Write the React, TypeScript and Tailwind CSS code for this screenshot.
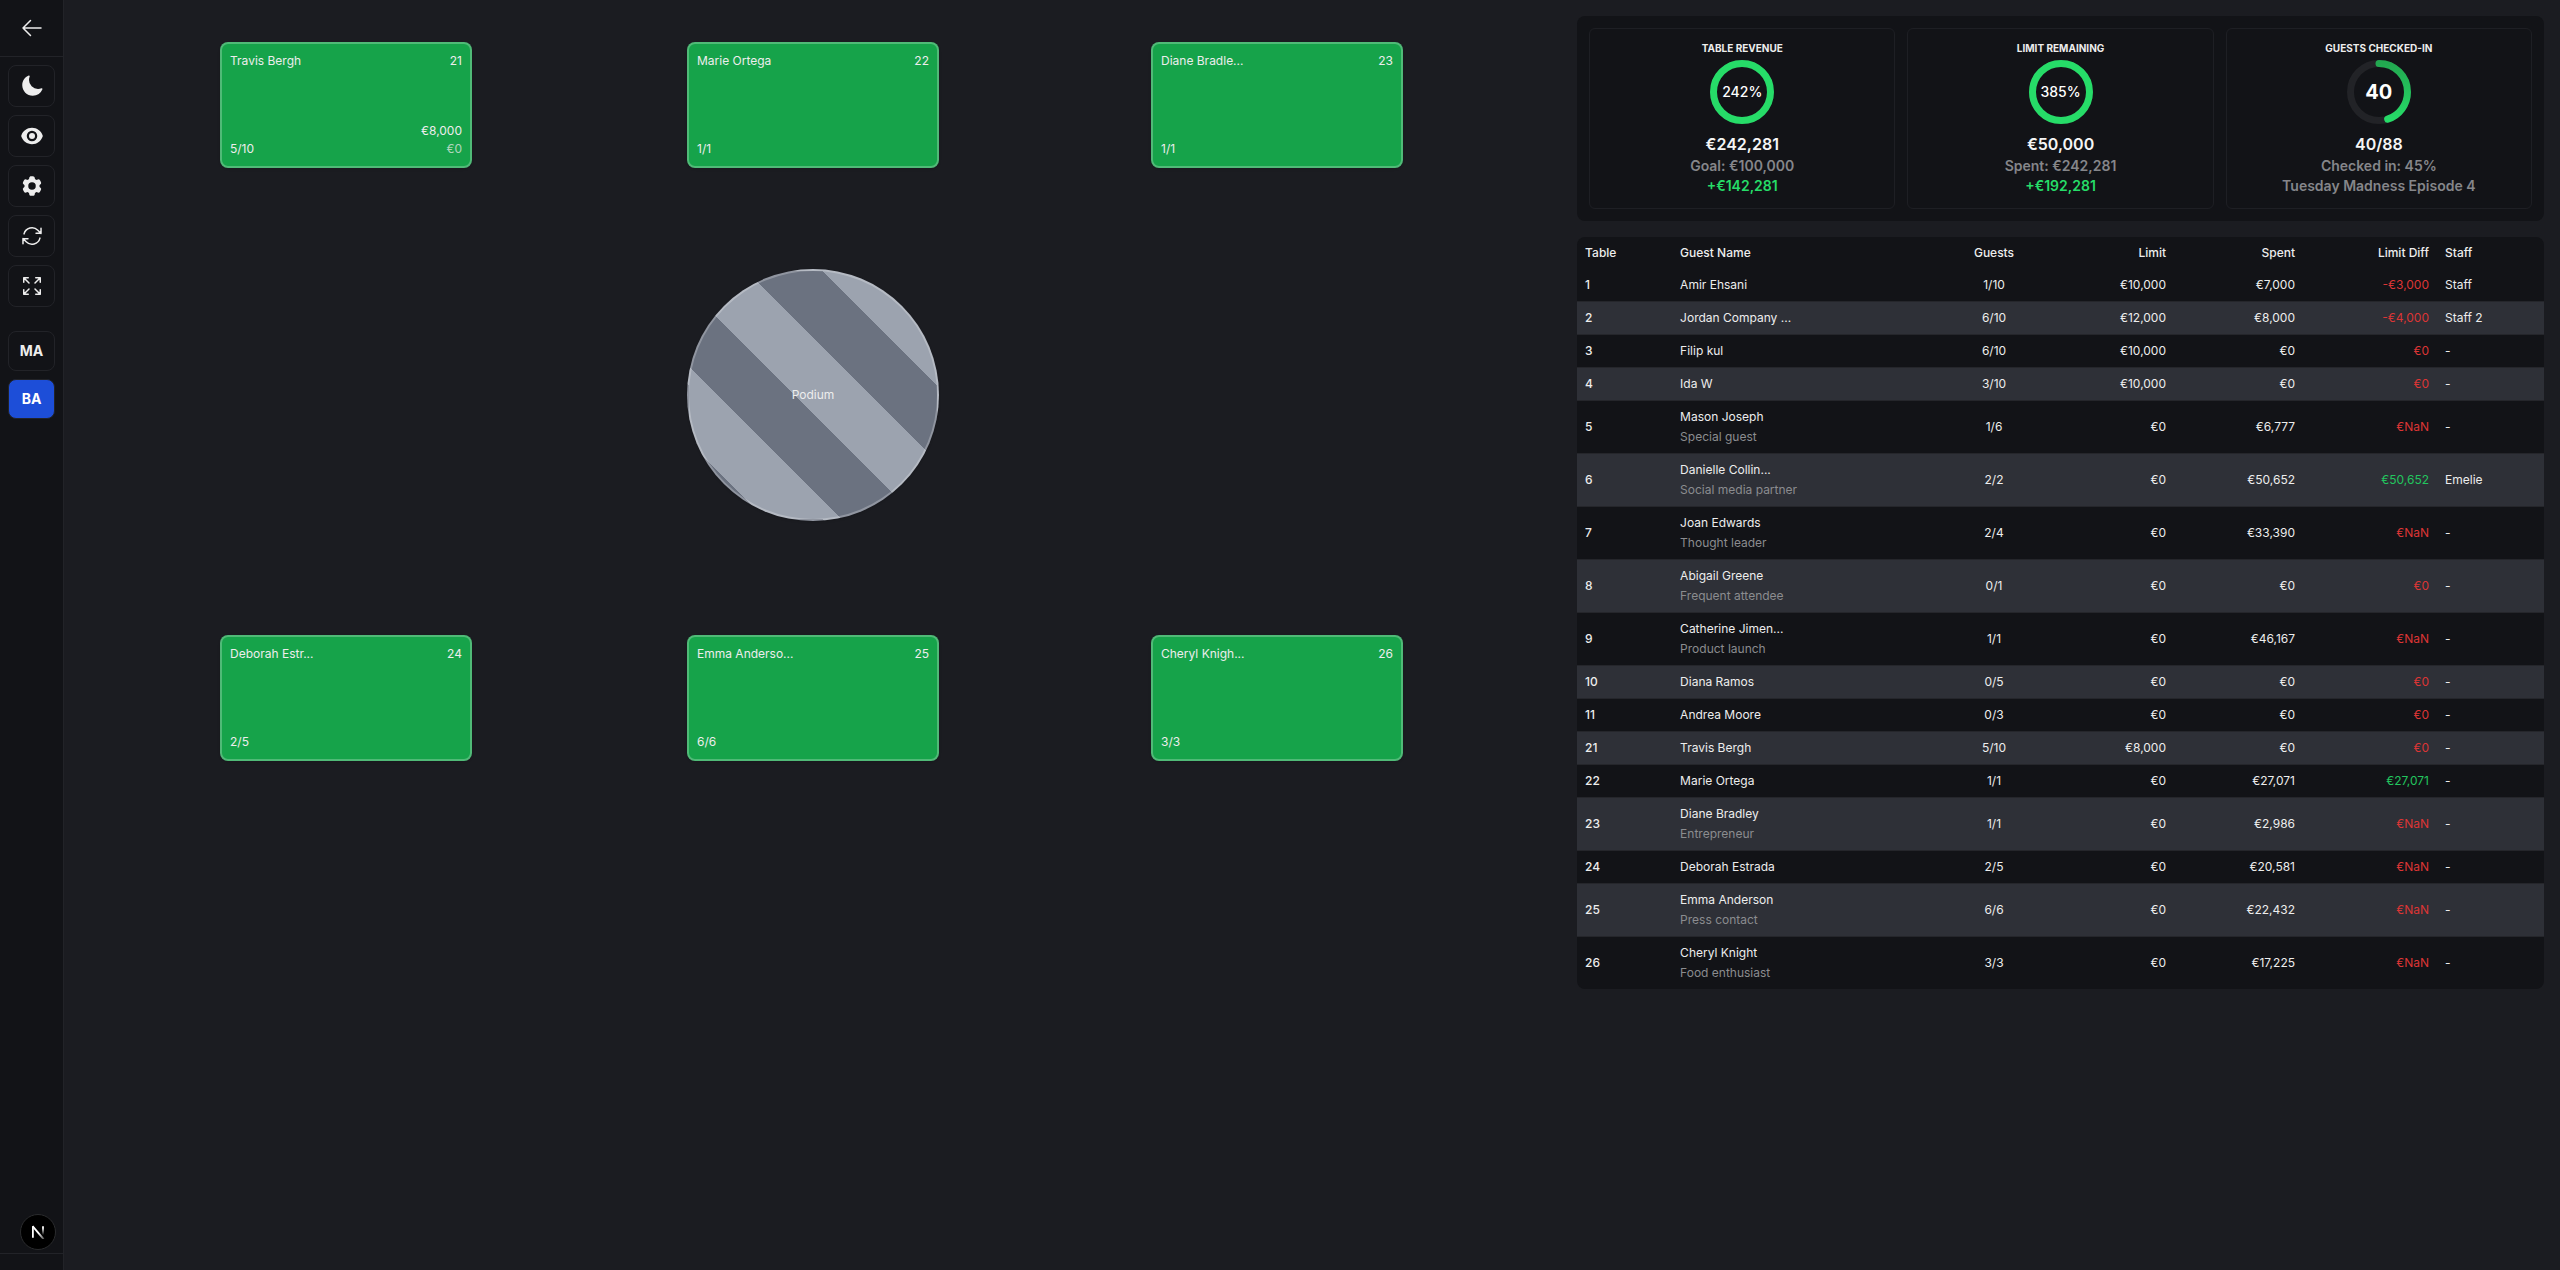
import type { ReactNode } from "react";
import {
  HiCog6Tooth,
  HiEye,
  HiMoon,
  HiOutlineArrowLeft,
  HiOutlineArrowPath,
  HiOutlineArrowsPointingOut,
} from "react-icons/hi2";

type Booking = {
  table: number;
  name: string;
  note?: string;
  guests: string;
  limit: string;
  spent: string;
  diff: string;
  staff?: string;
};

type FloorTable = {
  table: number;
  name: string;
  guests: string;
  limit?: string;
  spent?: string;
  x: number;
  y: number;
};

const bookings: Booking[] = [
  { table: 1, name: "Amir Ehsani", guests: "1/10", limit: "€10,000", spent: "€7,000", diff: "-€3,000", staff: "Staff" },
  { table: 2, name: "Jordan Company ...", guests: "6/10", limit: "€12,000", spent: "€8,000", diff: "-€4,000", staff: "Staff 2" },
  { table: 3, name: "Filip kul", guests: "6/10", limit: "€10,000", spent: "€0", diff: "€0" },
  { table: 4, name: "Ida W", guests: "3/10", limit: "€10,000", spent: "€0", diff: "€0" },
  { table: 5, name: "Mason Joseph", note: "Special guest", guests: "1/6", limit: "€0", spent: "€6,777", diff: "€NaN" },
  { table: 6, name: "Danielle Collin...", note: "Social media partner", guests: "2/2", limit: "€0", spent: "€50,652", diff: "€50,652", staff: "Emelie" },
  { table: 7, name: "Joan Edwards", note: "Thought leader", guests: "2/4", limit: "€0", spent: "€33,390", diff: "€NaN" },
  { table: 8, name: "Abigail Greene", note: "Frequent attendee", guests: "0/1", limit: "€0", spent: "€0", diff: "€0" },
  { table: 9, name: "Catherine Jimen...", note: "Product launch", guests: "1/1", limit: "€0", spent: "€46,167", diff: "€NaN" },
  { table: 10, name: "Diana Ramos", guests: "0/5", limit: "€0", spent: "€0", diff: "€0" },
  { table: 11, name: "Andrea Moore", guests: "0/3", limit: "€0", spent: "€0", diff: "€0" },
  { table: 21, name: "Travis Bergh", guests: "5/10", limit: "€8,000", spent: "€0", diff: "€0" },
  { table: 22, name: "Marie Ortega", guests: "1/1", limit: "€0", spent: "€27,071", diff: "€27,071" },
  { table: 23, name: "Diane Bradley", note: "Entrepreneur", guests: "1/1", limit: "€0", spent: "€2,986", diff: "€NaN" },
  { table: 24, name: "Deborah Estrada", guests: "2/5", limit: "€0", spent: "€20,581", diff: "€NaN" },
  { table: 25, name: "Emma Anderson", note: "Press contact", guests: "6/6", limit: "€0", spent: "€22,432", diff: "€NaN" },
  { table: 26, name: "Cheryl Knight", note: "Food enthusiast", guests: "3/3", limit: "€0", spent: "€17,225", diff: "€NaN" },
];

const floorTables: FloorTable[] = [
  { table: 21, name: "Travis Bergh", guests: "5/10", limit: "€8,000", spent: "€0", x: 156, y: 42 },
  { table: 22, name: "Marie Ortega", guests: "1/1", x: 623, y: 42 },
  { table: 23, name: "Diane Bradle...", guests: "1/1", x: 1087, y: 42 },
  { table: 24, name: "Deborah Estr...", guests: "2/5", x: 156, y: 635 },
  { table: 25, name: "Emma Anderso...", guests: "6/6", x: 623, y: 635 },
  { table: 26, name: "Cheryl Knigh...", guests: "3/3", x: 1087, y: 635 },
];

const tools = [
  { label: "Toggle dark mode", icon: HiMoon },
  { label: "Toggle visibility", icon: HiEye },
  { label: "Settings", icon: HiCog6Tooth },
  { label: "Refresh", icon: HiOutlineArrowPath },
  { label: "Fullscreen", icon: HiOutlineArrowsPointingOut },
];

function Sidebar() {
  return (
    <aside className="flex w-16 shrink-0 flex-col border-r border-[#222328] bg-[#121317]">
      <div className="flex h-[57px] items-center justify-center border-b border-[#222328]">
        <button type="button" aria-label="Back">
          <HiOutlineArrowLeft className="size-6" />
        </button>
      </div>

      <div className="flex flex-col gap-2 p-2">
        {tools.map(({ label, icon: Icon }) => (
          <button
            key={label}
            type="button"
            aria-label={label}
            className="flex items-center justify-center rounded-lg border border-[#222328] p-2"
          >
            <Icon className="size-6" />
          </button>
        ))}
      </div>

      {/* Areas */}
      <div className="mt-2 flex flex-col gap-2 p-2 text-sm font-bold">
        <button type="button" className="h-10 rounded-lg border border-[#222328]">
          MA
        </button>
        <button type="button" className="h-10 rounded-lg border border-[#222328] bg-[#1d4ed8] text-white">
          BA
        </button>
      </div>

      <div className="mt-auto border-t border-[#222328] p-2" />
    </aside>
  );
}

function FloorCard({ item }: { item: FloorTable }) {
  return (
    <div
      className="absolute flex h-[126px] w-[252px] flex-col justify-between rounded-lg border-2 border-white/25 bg-[#16a34a] p-2 shadow-sm"
      style={{ left: item.x, top: item.y }}
    >
      <div className="flex justify-between">
        <span>{item.name}</span>
        <span>{item.table}</span>
      </div>
      <div className="flex items-end justify-between">
        <span>{item.guests}</span>
        {item.limit && (
          <div className="text-right">
            <div>{item.limit}</div>
            <div className="opacity-70">{item.spent}</div>
          </div>
        )}
      </div>
    </div>
  );
}

function FloorPlan() {
  return (
    <main className="relative w-3/5 text-xs leading-[18px]">
      {floorTables.map((item) => (
        <FloorCard key={item.table} item={item} />
      ))}
      <div className="absolute top-[269px] left-[623px] flex size-[252px] items-center justify-center rounded-full border-2 border-white/25 bg-[repeating-linear-gradient(45deg,#6b7280_0px,#6b7280_54px,#9ca3af_54px,#9ca3af_108px)] shadow-sm">
        Podium
      </div>
    </main>
  );
}

const RADIUS = 28.5;
const LENGTH = 2 * Math.PI * RADIUS;

function Ring({ id, percent, children }: { id: string; percent: number; children: ReactNode }) {
  const full = percent >= 100;
  return (
    <div className="mt-1 grid size-16 place-items-center">
      <svg viewBox="0 0 64 64" fill="none" strokeWidth="7" className="col-start-1 row-start-1 size-16 -rotate-90">
        <defs>
          <linearGradient id={id} x1="0" y1="0" x2="1" y2="0">
            <stop offset="0" stopColor="#26dc68" />
            <stop offset="1" stopColor="#22a850" />
          </linearGradient>
        </defs>
        <circle cx="32" cy="32" r={RADIUS} stroke="#222327" />
        <circle
          cx="32"
          cy="32"
          r={RADIUS}
          stroke={full ? "#26dc68" : `url(#${id})`}
          strokeLinecap="round"
          strokeDasharray={`${(Math.min(percent, 100) / 100) * LENGTH} ${LENGTH}`}
        />
      </svg>
      <div className="col-start-1 row-start-1 text-white">{children}</div>
    </div>
  );
}

type StatProps = {
  title: string;
  ring: ReactNode;
  value: string;
  detail: string;
  extra: string;
  extraClass: string;
};

function Stat({ title, ring, value, detail, extra, extraClass }: StatProps) {
  return (
    <section className="flex flex-1 flex-col items-center rounded-md border border-[#1e1f24] p-3 text-sm leading-5 font-semibold">
      <h2 className="text-[10px] leading-[15px] font-bold uppercase">{title}</h2>
      {ring}
      <p className="mt-2 text-base leading-6 text-[#f5f5f5]">{value}</p>
      <p className="text-[#85868a]">{detail}</p>
      <p className={extraClass}>{extra}</p>
    </section>
  );
}

function diffColor(diff: string) {
  return /^€[1-9]/.test(diff) ? "text-[#22c55e]" : "text-[#dc3535]";
}

function BookingTable() {
  return (
    <div className="overflow-hidden rounded-lg bg-[#121317]">
      <table className="w-full table-fixed text-xs leading-5">
        <thead>
          <tr className="text-left [&>th]:px-2 [&>th]:py-[6px] [&>th]:font-medium">
            <th className="w-[95px]">Table</th>
            <th>Guest Name</th>
            <th className="w-[102px] text-center">Guests</th>
            <th className="w-[129px] text-right">Limit</th>
            <th className="w-[129px] text-right">Spent</th>
            <th className="w-[134px] text-right">Limit Diff</th>
            <th className="w-[107px]">Staff</th>
          </tr>
        </thead>
        <tbody>
          {bookings.map((b) => (
            <tr
              key={b.table}
              className="border-b border-[#25262b] last:border-b-0 even:bg-[#2e3037] [&>td]:px-2 [&>td]:py-[6px]"
            >
              <td className="font-medium">{b.table}</td>
              <td>
                <div>{b.name}</div>
                {b.note && <div className="text-[#8b8c8f]">{b.note}</div>}
              </td>
              <td className="text-center">{b.guests}</td>
              <td className="text-right">{b.limit}</td>
              <td className="text-right">{b.spent}</td>
              <td className="text-right">
                <span className={diffColor(b.diff)}>{b.diff}</span>
              </td>
              <td>{b.staff ?? "-"}</td>
            </tr>
          ))}
        </tbody>
      </table>
    </div>
  );
}

export default function App() {
  return (
    <div className="flex min-h-screen bg-[#1b1c21] font-['Inter',sans-serif] text-[#ededed]">
      <Sidebar />
      <FloorPlan />

      <div className="flex w-2/5 flex-col gap-4 p-4">
        <div className="flex gap-3 rounded-lg bg-[#121317] p-3">
          <Stat
            title="Table Revenue"
            ring={<Ring id="revenue" percent={242}><span className="font-medium">242%</span></Ring>}
            value="€242,281"
            detail="Goal: €100,000"
            extra="+€142,281"
            extraClass="text-[#26dc68]"
          />
          <Stat
            title="Limit Remaining"
            ring={<Ring id="limit" percent={385}><span className="font-medium">385%</span></Ring>}
            value="€50,000"
            detail="Spent: €242,281"
            extra="+€192,281"
            extraClass="text-[#26dc68]"
          />
          <Stat
            title="Guests Checked-in"
            ring={<Ring id="guests" percent={45}><span className="text-xl font-bold">40</span></Ring>}
            value="40/88"
            detail="Checked in: 45%"
            extra="Tuesday Madness Episode 4"
            extraClass="text-[#85868a]"
          />
        </div>

        <BookingTable />
      </div>

      {/* Dev tools badge */}
      <button
        type="button"
        aria-label="Open Next.js Dev Tools"
        className="fixed bottom-5 left-5 flex size-9 items-center justify-center rounded-full border border-[#2b2c2e] bg-black"
      >
        <svg viewBox="0 0 14 14" fill="none" strokeWidth="1.8" className="size-[14px]">
          <defs>
            <linearGradient id="stem" x1="0" y1="3" x2="0" y2="10" gradientUnits="userSpaceOnUse">
              <stop stopColor="#fff" />
              <stop offset="1" stopColor="#fff" stopOpacity="0" />
            </linearGradient>
            <linearGradient id="slash" x1="8" y1="8" x2="13" y2="14" gradientUnits="userSpaceOnUse">
              <stop stopColor="#fff" />
              <stop offset="1" stopColor="#fff" stopOpacity="0.3" />
            </linearGradient>
          </defs>
          <path d="M1.9 12.8V1.2" stroke="#fff" />
          <path d="M1.6 1.2l11 13" stroke="url(#slash)" />
          <path d="M12 1.2v9" stroke="url(#stem)" />
        </svg>
      </button>
    </div>
  );
}
